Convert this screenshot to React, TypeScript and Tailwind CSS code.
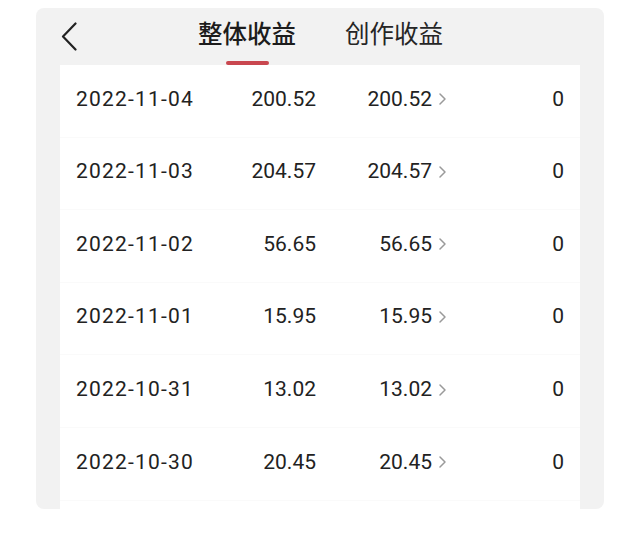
import React from "react";

const rows = [
  ["2022-11-04", "200.52", "200.52", "0"],
  ["2022-11-03", "204.57", "204.57", "0"],
  ["2022-11-02", "56.65", "56.65", "0"],
  ["2022-11-01", "15.95", "15.95", "0"],
  ["2022-10-31", "13.02", "13.02", "0"],
  ["2022-10-30", "20.45", "20.45", "0"],
];

export default function App() {
  return (
    <div className="w-[640px] h-[543px] bg-white pt-[8px] pl-[36px] overflow-hidden">
      <div
        className="w-[568px] h-[501px] bg-[#f2f2f2] rounded-[8px] flex flex-col overflow-hidden"
        style={{ fontFamily: "Roboto, 'Noto Sans CJK SC', sans-serif" }}
      >
        <div className="h-[57px] shrink-0 flex items-start relative">
          <svg className="absolute left-[25px] top-[14px]" width="16" height="29" viewBox="0 0 16 29">
            <path d="M14.5 1.5 L2 14.5 L14.5 27.5" fill="none" stroke="#222" strokeWidth="2.2" strokeLinecap="round" strokeLinejoin="round" />
          </svg>
          <div className="flex ml-[162px] mt-[10px] gap-[49px]">
            <div className="flex flex-col items-center">
              <span className="text-[24.5px] leading-[30px] font-medium text-[#1c1c1c]" style={{ fontFamily: "'Noto Sans CJK SC', sans-serif" }}>
                整体收益
              </span>
              <span className="mt-[13px] w-[43px] h-[4px] rounded-full bg-[#c9474f]" />
            </div>
            <span className="text-[24.5px] leading-[30px] text-[#262626]" style={{ fontFamily: "'Noto Sans CJK SC', sans-serif" }}>
              创作收益
            </span>
          </div>
        </div>
        <div className="ml-[24px] w-[520px] flex-1 bg-white">
          {rows.map((r, i) => (
            <div
              key={i}
              className="h-[72.6px] flex items-center pb-[3px] text-[21px] text-[#222] border-b border-[#fafafa]"
            >
              <span className="w-[156px] pl-[16px] tracking-[1.2px]">{r[0]}</span>
              <span className="w-[100px] text-right">{r[1]}</span>
              <span className="w-[116px] text-right">{r[2]}</span>
              <svg className="ml-[6px]" width="9" height="14" viewBox="0 0 9 14">
                <path d="M2 2 L7 7 L2 12" fill="none" stroke="#9a9a9a" strokeWidth="1.5" strokeLinecap="round" strokeLinejoin="round" />
              </svg>
              <span className="flex-1 text-right pr-[16px]">{r[3]}</span>
            </div>
          ))}
        </div>
      </div>
    </div>
  );
}
